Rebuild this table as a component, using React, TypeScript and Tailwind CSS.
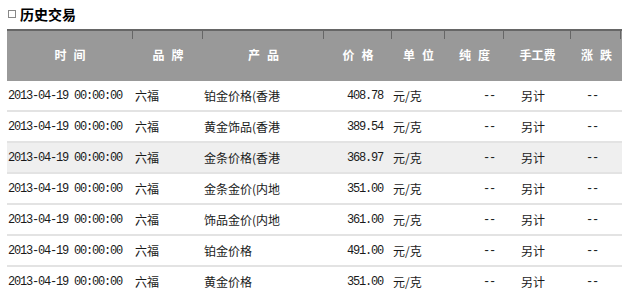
import React from "react";

const cols = [
  { w: 126, h: ["时", "间"] },
  { w: 70, h: ["品", "牌"] },
  { w: 121, h: ["产", "品"] },
  { w: 68, h: ["价", "格"] },
  { w: 53, h: ["单", "位"] },
  { w: 59, h: ["纯", "度"] },
  { w: 67, h: ["手工费"] },
  { w: 51, h: ["涨", "跌"] },
];

const rows = [
  { p: "铂金价格(香港", v: "408.78" },
  { p: "黄金饰品(香港", v: "389.54" },
  { p: "金条价格(香港", v: "368.97", gray: true },
  { p: "金条金价(内地", v: "351.00" },
  { p: "饰品金价(内地", v: "361.00" },
  { p: "铂金价格", v: "491.00" },
  { p: "黄金价格", v: "351.00" },
];

const mono = "font-['Liberation_Mono',monospace] text-[12px] tracking-[-1.2px]";
const cjk = "font-['Noto_Sans_CJK_SC',sans-serif] text-[12px]";

export default function App() {
  return (
    <div className="w-[628px] h-[293px] overflow-hidden bg-white text-[#1a1a1a]">
      <div className="flex items-center h-[29px] pl-[8px] pb-[1px]">
        <span className="w-[8px] h-[8px] border border-[#888] mr-[4px]" />
        <span className="font-['Noto_Sans_CJK_SC',sans-serif] text-[14px] font-bold text-black leading-none">历史交易</span>
      </div>
      <div className="ml-[7px] w-[615px]">
        <div className="flex h-[52px] bg-[#999999] border-t-2 border-[#666666]">
          {cols.map((c, i) => (
            <div
              key={i}
              className="relative flex items-center justify-center gap-[7px] text-white font-bold font-['Noto_Sans_CJK_SC',sans-serif] text-[12px] pb-[2px]"
              style={{ width: c.w }}
            >
              {c.h.map((t, j) => (
                <span key={j}>{t}</span>
              ))}
              <span className={i === cols.length - 1 ? "absolute top-0 right-px w-px h-[8px] bg-[#666666]" : "absolute top-0 right-0 w-px h-[8px] bg-[#666666]"} />
            </div>
          ))}
        </div>
        {rows.map((r, i) => (
          <div
            key={i}
            className={`flex h-[31px] items-center border-b-2 border-[#e3e3e3] ${r.gray ? "bg-[#efefef]" : "bg-white"}`}
          >
            <div className={`w-[126px] pl-[1px] ${mono}`}>2013-04-19 00:00:00</div>
            <div className={`w-[70px] pl-[2px] ${cjk}`}>六福</div>
            <div className={`w-[121px] pl-[1px] ${cjk}`}>{r.p}</div>
            <div className={`w-[68px] pr-[9px] text-right ${mono}`}>{r.v}</div>
            <div className={`w-[53px] pl-[1px] ${cjk}`}>元/克</div>
            <div className={`w-[59px] pr-[9px] text-right ${mono}`}>--</div>
            <div className={`w-[67px] pl-[17px] ${cjk}`}>另计</div>
            <div className={`w-[51px] pl-[15px] ${mono}`}>--</div>
          </div>
        ))}
      </div>
    </div>
  );
}
